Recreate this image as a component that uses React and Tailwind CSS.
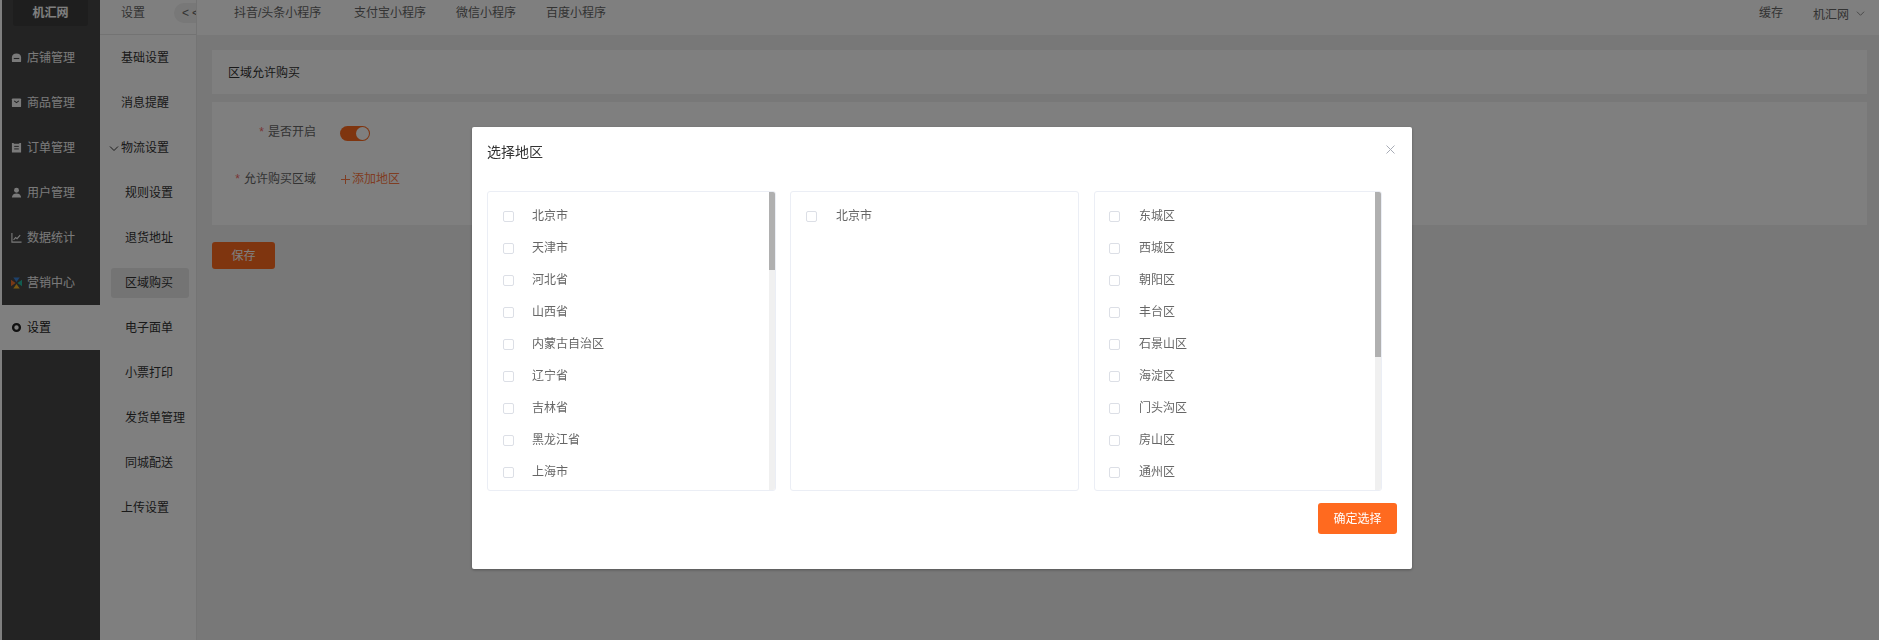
import React from "react";

const ShopIcon = () => (
  <svg width="11" height="11" viewBox="0 0 12 12" fill="currentColor">
    <path d="M1 6C1 3 3 1.500 6 1.500S11 3 11 6v4a1 1 0 0 1-1 1H2a1 1 0 0 1-1-1z" />
    <rect x="3" y="6.500" width="6" height="1.200" fill="#464646" />
  </svg>
);

const BagIcon = () => (
  <svg width="11" height="11" viewBox="0 0 12 12" fill="currentColor">
    <rect x="1" y="1.500" width="10" height="9.500" rx="1" />
    <path d="M3.500 4.200 6 6.200l2.500-2" fill="none" stroke="#464646" strokeWidth="1.100" />
  </svg>
);

const OrderIcon = () => (
  <svg width="11" height="11" viewBox="0 0 12 12" fill="currentColor">
    <path d="M1 1h2v1h6V1h2v10.500H1z" />
    <rect x="3.500" y="4.200" width="5" height="1.100" fill="#464646" />
    <rect x="3.500" y="7" width="5" height="1.100" fill="#464646" />
  </svg>
);

const UserIcon = () => (
  <svg width="11" height="11" viewBox="0 0 12 12" fill="currentColor">
    <circle cx="6" cy="3.500" r="2.700" />
    <path d="M1 11.500c0-2.800 2-4.500 5-4.500s5 1.700 5 4.500z" />
  </svg>
);

const ChartIcon = () => (
  <svg width="11" height="11" viewBox="0 0 12 12" fill="none" stroke="currentColor" strokeWidth="1.200">
    <path d="M1 1v10h10.500" />
    <path d="M2.800 8.500 5 6l1.600 1.300L10 3.500" />
  </svg>
);

const MarketIcon = () => (
  <svg width="12" height="12" viewBox="0 0 12 12">
    <path d="M2.500 0h7L6 5z" fill="#3b82d6" />
    <path d="M12 2.500v7L7 6z" fill="#22b8a0" />
    <path d="M2.500 12h7L6 7z" fill="#f5b325" />
    <path d="M0 2.500v7L5 6z" fill="#f0702c" />
  </svg>
);

const GearIcon = () => (
  <svg width="11" height="11" viewBox="0 0 12 12" fill="none" stroke="currentColor" strokeWidth="2.600">
    <circle cx="6" cy="6" r="3.700" />
  </svg>
);

const menus = [
  { name: "店铺管理", icon: <ShopIcon /> },
  { name: "商品管理", icon: <BagIcon /> },
  { name: "订单管理", icon: <OrderIcon /> },
  { name: "用户管理", icon: <UserIcon /> },
  { name: "数据统计", icon: <ChartIcon /> },
  { name: "营销中心", icon: <MarketIcon /> },
  { name: "设置", icon: <GearIcon />, active: true },
];

const subMenus = [
  { name: "基础设置" },
  { name: "消息提醒" },
  { name: "物流设置", open: true },
  { name: "规则设置", child: true },
  { name: "退货地址", child: true },
  { name: "区域购买", child: true, active: true },
  { name: "电子面单", child: true },
  { name: "小票打印", child: true },
  { name: "发货单管理", child: true },
  { name: "同城配送", child: true },
  { name: "上传设置" },
];

const tabs = ["抖音/头条小程序", "支付宝小程序", "微信小程序", "百度小程序"];

const provinces = ["北京市", "天津市", "河北省", "山西省", "内蒙古自治区", "辽宁省", "吉林省", "黑龙江省", "上海市"];
const districts = ["东城区", "西城区", "朝阳区", "丰台区", "石景山区", "海淀区", "门头沟区", "房山区", "通州区"];

const Sidebar = () => (
  <div className="w-[98px] ml-[2px] shrink-0 bg-[#464646] text-[#f5f5f5]">
    <div className="h-[35px] pl-[11px]">
      <div className="w-[75px] h-[26px] rounded-b-[3px] bg-[#3c3c3c] flex items-center justify-center font-bold text-white">
        机汇网
      </div>
    </div>
    {menus.map((m) => (
      <div
        key={m.name}
        className={
          m.active
            ? "h-[45px] pl-[9px] flex items-center gap-[5px] bg-white text-[#222]"
            : "h-[45px] pl-[9px] flex items-center gap-[5px]"
        }
      >
        <span className="w-[11px] flex justify-center">{m.icon}</span>
        <span>{m.name}</span>
      </div>
    ))}
  </div>
);

const SubNav = () => (
  <div className="w-[97px] shrink-0 bg-white border-r border-[#e8e8e8] overflow-hidden text-[#333]">
    <div className="h-[35px] pl-[21px] pt-[3px] flex items-start border-b border-[#e6e6e6] text-[#666] relative">
      <span className="w-[53px] shrink-0 leading-[20px]">设置</span>
      <div className="w-[40px] h-[20px] shrink-0 rounded-l-[10px] bg-[#f0f0f0] pl-[8px] leading-[20px] text-[#666] tracking-[3px]">
        {"<<"}
      </div>
    </div>
    {subMenus.map((s) => (
      <div
        key={s.name}
        className={s.child ? "h-[45px] pl-[11px] flex items-center" : "h-[45px] pl-[7px] flex items-center"}
      >
        {s.open ? (
          <svg width="14" height="14" viewBox="0 0 14 14" fill="none" stroke="#333" strokeWidth="1" className="shrink-0">
            <path d="M3 5.500 7 9.500 11 5.500" />
          </svg>
        ) : (
          !s.child && <span className="w-[14px]" />
        )}
        {s.child ? (
          <div className={s.active ? "w-[78px] h-[30px] pl-[14px] flex items-center rounded-[3px] bg-[#e8e8e8]" : "pl-[14px]"}>
            {s.name}
          </div>
        ) : (
          <span>{s.name}</span>
        )}
      </div>
    ))}
  </div>
);

const Main = () => (
  <div className="flex-1 min-w-0 bg-[#f0f0f0]">
    <div className="h-[35px] bg-white flex items-start pt-[6px] pl-[37px] pr-[14px] leading-[14px] text-[#666]">
      <div className="flex gap-[30px]">
        {tabs.map((t) => (
          <span key={t} className="first:w-[90px]">
            {t}
          </span>
        ))}
      </div>
      <span className="ml-auto">缓存</span>
      <span className="ml-[30px] mt-[2px]">机汇网</span>
      <svg width="9" height="9" viewBox="0 0 10 10" fill="none" stroke="#888" strokeWidth="1" className="ml-[7px] mt-[3px]">
        <path d="M1 3 5 7 9 3" />
      </svg>
    </div>
    <div className="pt-[15px] pl-[15px] pr-[12px]">
      <div className="h-[44px] bg-white flex items-center pl-[16px] pt-[1px] text-[#333]">区域允许购买</div>
      <div className="mt-[8px] h-[123px] bg-white pt-[20px] text-[#666]">
        <div className="h-[20px] flex items-center">
          <div className="w-[104px] text-right leading-[14px] -mt-[1px]">
            <span className="text-[#f56c6c] mr-[4px]">*</span>是否开启
          </div>
          <div className="ml-[24px] mt-[2px] w-[30px] h-[15px] rounded-full bg-[#ff6a1f] flex items-center justify-end pr-[1px]">
            <div className="w-[13px] h-[13px] rounded-full bg-white" />
          </div>
        </div>
        <div className="mt-[27px] h-[20px] flex items-center">
          <div className="w-[104px] text-right">
            <span className="text-[#f56c6c] mr-[4px]">*</span>允许购买区域
          </div>
          <div className="ml-[25px] flex items-center gap-[2px] text-[#ff7a45]">
            <svg width="9" height="9" viewBox="0 0 9 9" stroke="currentColor" strokeWidth="1">
              <path d="M0 4.500h9M4.500 0v9" />
            </svg>
            <span>添加地区</span>
          </div>
        </div>
      </div>
      <div className="mt-[17px] w-[63px] h-[27px] rounded-[3px] bg-[#ff6a1f] text-white flex items-center justify-center">
        保存
      </div>
    </div>
  </div>
);

const RegionList = ({ items, width, thumb, inset, labelGap }) => (
  <div className={`${width} h-[300px] shrink-0 flex rounded-[3px] border border-[#ebeef5] overflow-hidden`}>
    <div className="flex-1 pt-[8px]">
      {items.map((item) => (
        <div key={item} className={`h-[32px] flex items-center ${inset} text-[#666]`}>
          <span className="w-[11px] h-[11px] rounded-[2px] border border-[#dcdfe6] shrink-0" />
          <span className={labelGap}>{item}</span>
        </div>
      ))}
    </div>
    {thumb && (
      <div className="w-[6px] bg-[#f0f0f0]">
        <div className={`${thumb} bg-[#b0b0b0]`} />
      </div>
    )}
  </div>
);

const RegionModal = () => (
  <div className="fixed inset-0 bg-[rgba(0,0,0,0.5)] pl-[472px] pt-[127px]">
    <div className="relative w-[940px] h-[442px] rounded-[2px] bg-white shadow-[0_1px_3px_rgba(0,0,0,0.3)] pl-[15px]">
      <div className="h-[64px] pt-[16px] text-[14px] leading-[18px] text-[#333]">选择地区</div>
      <svg width="9" height="9" viewBox="0 0 9 9" fill="none" stroke="#a8acb6" strokeWidth="1" className="absolute top-[18px] right-[17px]">
        <path d="M.5.500l8 8M8.500.500l-8 8" />
      </svg>
      <div className="flex">
        <RegionList items={provinces} width="w-[289px]" thumb="h-[78px]" inset="pl-[15px]" labelGap="ml-[18px]" />
        <RegionList items={["北京市"]} width="w-[289px] ml-[14px]" inset="pl-[15px]" labelGap="ml-[19px]" />
        <RegionList items={districts} width="w-[288px] ml-[15px]" thumb="h-[165px]" inset="pl-[14px]" labelGap="ml-[19px]" />
      </div>
      <div className="mt-[12px] w-[79px] h-[31px] ml-[831px] rounded-[3px] bg-[#ff6a1f] text-white flex items-center justify-center">
        确定选择
      </div>
    </div>
  </div>
);

const App = () => {
  return (
    <div className="relative h-[640px] w-full flex overflow-hidden bg-white text-[12px] font-['Liberation_Sans','Noto_Sans_CJK_SC',sans-serif]">
      <Sidebar />
      <SubNav />
      <Main />
      <RegionModal />
    </div>
  );
};

export default App;
